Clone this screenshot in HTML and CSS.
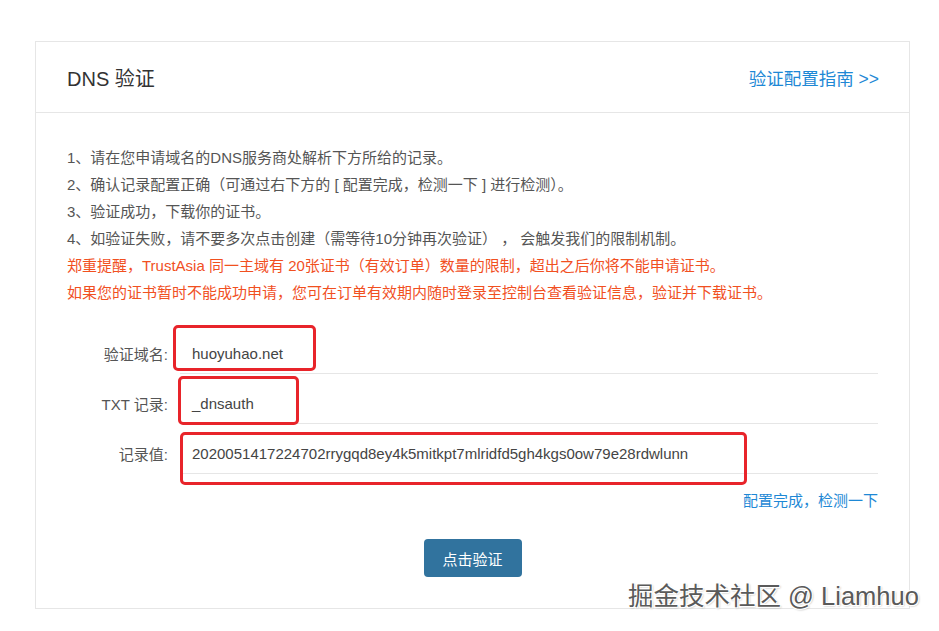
FILE: index.html
```html
<!DOCTYPE html>
<html lang="zh-CN">
<head>
<meta charset="utf-8">
<title>DNS 验证</title>
<link rel="stylesheet" href="styles.css">
</head>
<body>
<div class="card">
  <div class="card-head">
    <h2 class="title">DNS 验证</h2>
    <a class="guide" href="#">验证配置指南 &gt;&gt;</a>
  </div>
  <div class="card-body">
    <ul class="notes">
      <li>1、请在您申请域名的DNS服务商处解析下方所给的记录。</li>
      <li>2、确认记录配置正确（可通过右下方的 [ 配置完成，检测一下 ] 进行检测）。</li>
      <li>3、验证成功，下载你的证书。</li>
      <li>4、如验证失败，请不要多次点击创建（需等待10分钟再次验证）&nbsp;，&nbsp;会触发我们的限制机制。</li>
      <li class="warn">郑重提醒，TrustAsia 同一主域有 20张证书（有效订单）数量的限制，超出之后你将不能申请证书。</li>
      <li class="warn">如果您的证书暂时不能成功申请，您可在订单有效期内随时登录至控制台查看验证信息，验证并下载证书。</li>
    </ul>
    <div class="form">
      <div class="row">
        <div class="label">验证域名:</div>
        <div class="value">huoyuhao.net<span class="mark mark-1"></span></div>
      </div>
      <div class="row">
        <div class="label">TXT 记录:</div>
        <div class="value">_dnsauth<span class="mark mark-2"></span></div>
      </div>
      <div class="row">
        <div class="label">记录值:</div>
        <div class="value">2020051417224702rrygqd8ey4k5mitkpt7mlridfd5gh4kgs0ow79e28rdwlunn<span class="mark mark-3"></span></div>
      </div>
    </div>
    <div class="check"><a href="#">配置完成，检测一下</a></div>
    <div class="actions"><button class="btn">点击验证</button></div>
  </div>
</div>
<div class="watermark">掘金技术社区 @ Liamhuo</div>
</body>
</html>
```
FILE: styles.css
```css
html, body {
  margin: 0;
  padding: 0;
  background: #fff;
}
body {
  padding: 41px 30px 0 35px;
  font-family: "Liberation Sans", "Noto Sans CJK SC", sans-serif;
  color: #555;
  position: relative;
  height: 631px;
  box-sizing: border-box;
  overflow: hidden;
}
.card {
  width: 875px;
  box-sizing: border-box;
  border: 1px solid #e6e6e6;
  height: 568px;
}
.card-head {
  height: 70px;
  border-bottom: 1px solid #e6e6e6;
  display: flex;
  align-items: center;
  justify-content: space-between;
  padding: 0 30px 0 31px;
}
.title {
  margin: 0;
  font-size: 20px;
  font-weight: normal;
  color: #333;
}
.guide {
  font-size: 17.5px;
  color: #1e88d5;
  text-decoration: none;
}
.card-body {
  padding: 31px 31px 0 31px;
}
.notes {
  list-style: none;
  margin: 0;
  padding: 0;
  font-size: 15px;
  line-height: 27px;
  color: #555;
}
.notes .warn {
  color: #f1501f;
}
.form {
  margin-top: 18px;
}
.row {
  display: flex;
  align-items: stretch;
  height: 50px;
  box-sizing: border-box;
}
.label {
  width: 113px;
  padding: 9px 12px 0 0;
  box-sizing: border-box;
  text-align: right;
  font-size: 15px;
  color: #555;
  display: flex;
  align-items: center;
  justify-content: flex-end;
}
.value {
  flex: 1;
  position: relative;
  height: 50px;
  box-sizing: border-box;
  border-bottom: 1px solid #e6e6e6;
  padding: 9px 0 0 12px;
  display: flex;
  align-items: center;
  font-size: 15px;
  color: #444;
}
.mark {
  position: absolute;
  border: 3px solid #e8242a;
  border-radius: 5px;
  box-sizing: border-box;
}
.mark-1 { left: -7px; top: 1px; width: 143px; height: 46px; }
.mark-2 { left: -2px; top: 2px; width: 121px; height: 49px; }
.mark-3 { left: 0; top: 8px; width: 567px; height: 53px; }
.check {
  margin-top: 16px;
  text-align: right;
  font-size: 15px;
  line-height: 22px;
}
.check a {
  color: #1e88d5;
  text-decoration: none;
}
.actions {
  display: flex;
  justify-content: center;
  margin-top: 27px;
}
.btn {
  width: 98px;
  height: 38px;
  border: none;
  border-radius: 4px;
  background: #31739e;
  color: #fff;
  font-family: "Liberation Sans", "Noto Sans CJK SC", sans-serif;
  font-size: 15px;
}
.watermark {
  position: absolute;
  left: 628px;
  top: 580px;
  font-size: 25.5px;
  line-height: 32px;
  color: #5a5a5a;
  font-family: "Liberation Sans", "Noto Sans CJK SC", sans-serif;
  text-shadow: 1px 1px 0 #fff, -1px -1px 0 #fff, 1px -1px 0 #fff, -1px 1px 0 #fff, 1px 1px 2px #999;
  white-space: nowrap;
}
```
